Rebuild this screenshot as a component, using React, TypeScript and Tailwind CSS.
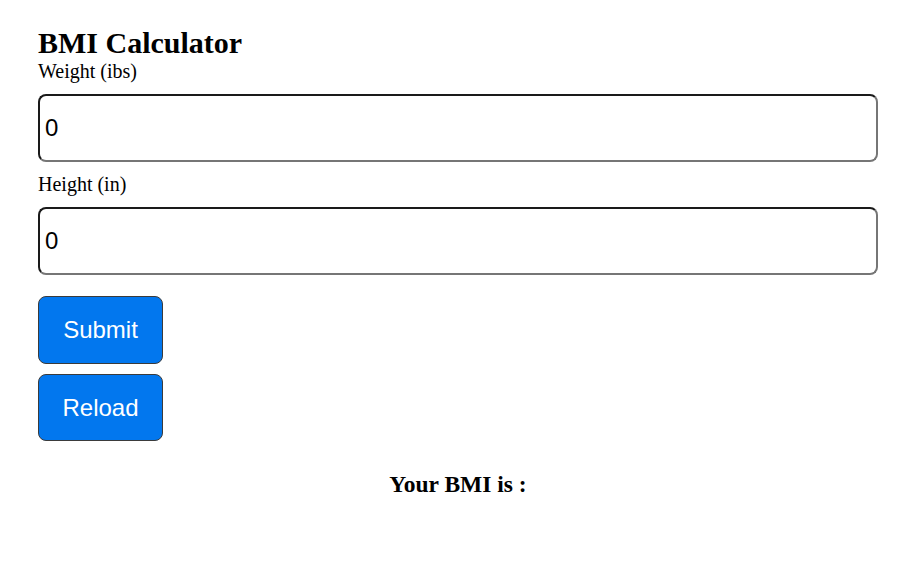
import { useState } from 'react';

export default function App() {
  const [weight, setWeight] = useState('0');
  const [height, setHeight] = useState('0');
  const [bmi, setBmi] = useState('');

  const handleSubmit = (e: React.FormEvent) => {
    e.preventDefault();
    const w = parseFloat(weight);
    const h = parseFloat(height);
    if (w > 0 && h > 0) setBmi(((w / (h * h)) * 703).toFixed(1));
  };

  return (
    <div className="min-h-screen bg-white pl-[38px] pr-[45px] pt-[26px] font-['Liberation_Serif',serif] text-black">
      <form onSubmit={handleSubmit}>
        <h2 className="text-[30px] font-bold leading-[34px]">BMI Calculator</h2>

        <label className="block text-[20px] leading-[23px]">Weight (ibs)</label>
        <input
          value={weight}
          onChange={(e) => setWeight(e.target.value)}
          className="my-[11px] block h-[68px] w-full rounded-lg border-2 border-t-[#1a1a1a] border-l-[#1a1a1a] border-r-[#767676] border-b-[#767676] px-[5px] font-['Liberation_Sans',Arial,sans-serif] text-[24px] outline-none"
        />

        <label className="block text-[20px] leading-[23px]">Height (in)</label>
        <input
          value={height}
          onChange={(e) => setHeight(e.target.value)}
          className="my-[11px] block h-[68px] w-full rounded-lg border-2 border-t-[#1a1a1a] border-l-[#1a1a1a] border-r-[#767676] border-b-[#767676] px-[5px] font-['Liberation_Sans',Arial,sans-serif] text-[24px] outline-none"
        />

        <div className="mt-[21px] flex flex-col items-start gap-[10px]">
          <button
            type="submit"
            className="h-[68px] w-[125px] rounded-lg border border-[#3b3b3b] bg-[#0277ee] font-['Liberation_Sans',Arial,sans-serif] text-[24px] text-white"
          >
            Submit
          </button>
          <button
            type="button"
            onClick={() => {
              setWeight('0');
              setHeight('0');
              setBmi('');
            }}
            className="h-[67px] w-[125px] rounded-lg border border-[#3b3b3b] bg-[#0277ee] font-['Liberation_Sans',Arial,sans-serif] text-[24px] text-white"
          >
            Reload
          </button>
        </div>

        <h3 className="mt-[30px] text-center text-[23.5px] font-bold leading-[27px]">Your BMI is : {bmi}</h3>
      </form>
    </div>
  );
}
